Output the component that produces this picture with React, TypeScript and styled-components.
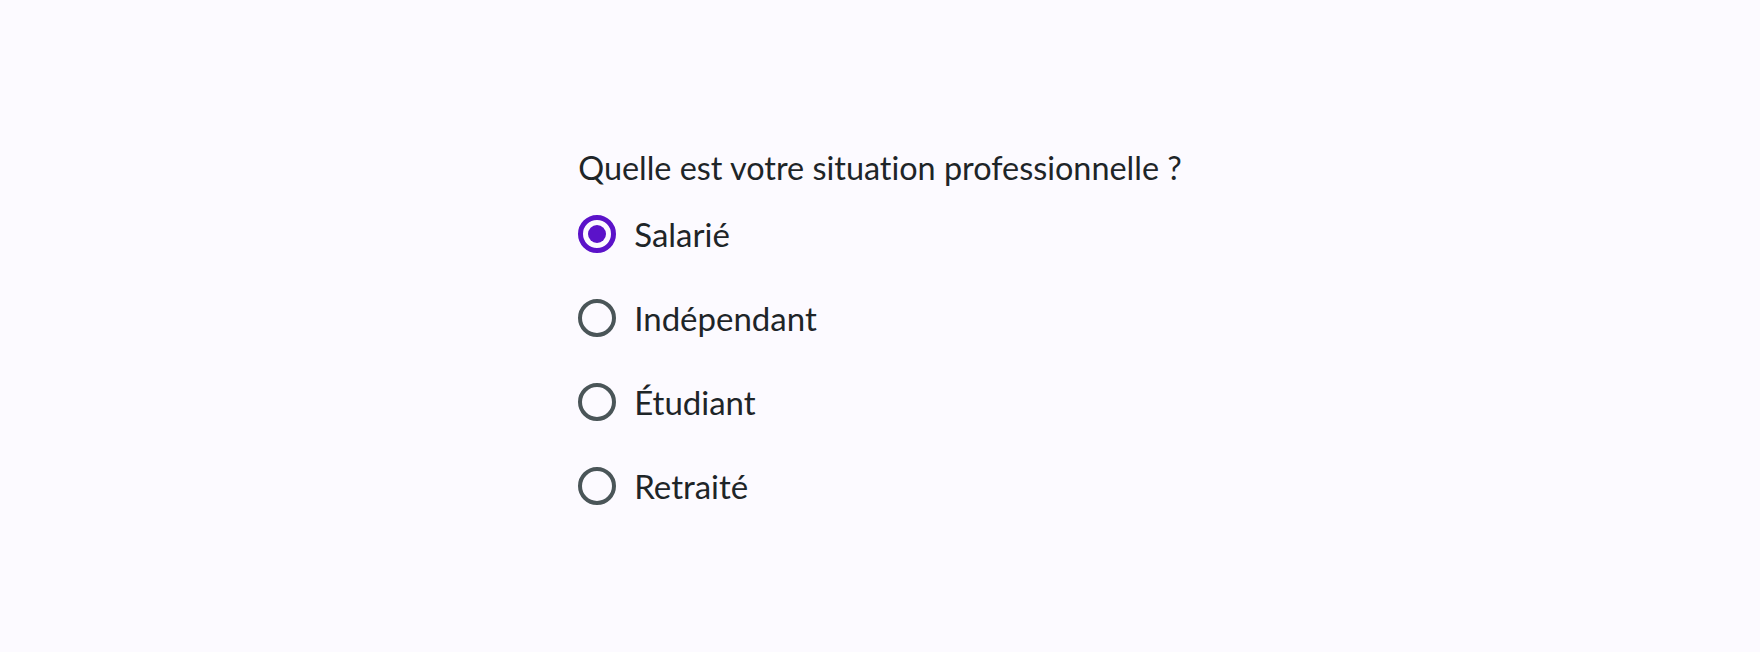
import React, { useState } from "react";
import styled, { createGlobalStyle } from "styled-components";

const GlobalStyle = createGlobalStyle`
	html, body {
		margin: 0;
		padding: 0;
		background: #fcfaff;
	}
	body {
		font-family: Lato, "Open Sans", sans-serif;
		font-variant-ligatures: none;
		color: #1e2528;
	}
`;

const options = ["Salarié", "Indépendant", "Étudiant", "Retraité"];

export default function App() {
	const [selected, setSelected] = useState("Salarié");

	return (
		<>
			<GlobalStyle />
			<Page>
				<Fieldset>
					<Legend>Quelle est votre situation professionnelle ?</Legend>
					<List>
						{options.map((option) => (
							<Option key={option}>
								<HiddenInput
									type="radio"
									name="situation"
									value={option}
									checked={selected === option}
									onChange={() => setSelected(option)}
								/>
								<Circle $checked={selected === option} />
								<Label>{option}</Label>
							</Option>
						))}
					</List>
				</Fieldset>
			</Page>
		</>
	);
}

const Page = styled.main`
	width: 1760px;
	height: 652px;
	display: flex;
	justify-content: center;
	padding-top: 149px;
	box-sizing: border-box;
`;

const Fieldset = styled.fieldset`
	border: none;
	margin: 0;
	padding: 0;
	width: fit-content;
	height: fit-content;
`;

const Legend = styled.legend`
	padding: 0;
	font-size: 32.4px;
	line-height: 38px;
	color: #1e2528;
`;

const List = styled.div`
	display: flex;
	flex-direction: column;
	gap: 46px;
	margin-top: 28px;
`;

const Option = styled.label`
	display: flex;
	align-items: center;
	gap: 18px;
	cursor: pointer;
	height: 38px;
`;

const HiddenInput = styled.input`
	position: absolute;
	opacity: 0;
	width: 0;
	height: 0;
`;

const Circle = styled.span<{ $checked: boolean }>`
	width: 38px;
	height: 38px;
	box-sizing: border-box;
	border-radius: 50%;
	border: ${(p) => (p.$checked ? "5px solid #5b12c9" : "4px solid #4a5558")};
	display: flex;
	align-items: center;
	justify-content: center;
	flex-shrink: 0;

	&::after {
		content: "";
		display: ${(p) => (p.$checked ? "block" : "none")};
		width: 18px;
		height: 18px;
		border-radius: 50%;
		background: #5b12c9;
	}
`;

const Label = styled.span`
	font-size: 33px;
	line-height: 38px;
	color: #1e2528;
`;
